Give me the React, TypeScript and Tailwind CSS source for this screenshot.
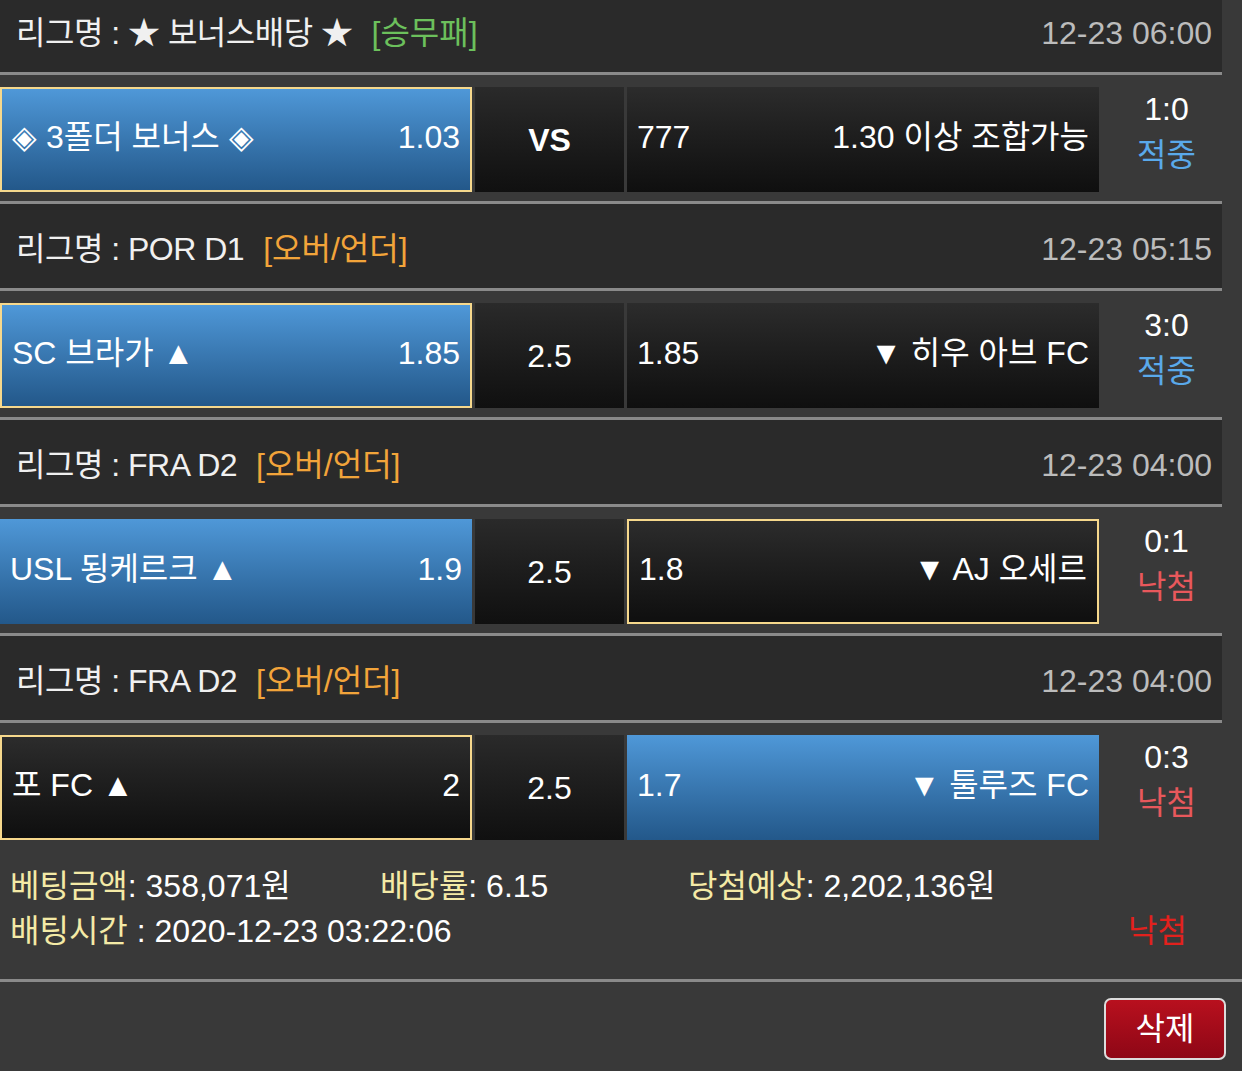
const FONT = { fontFamily: '"Liberation Sans", "Noto Sans CJK KR", sans-serif' };

type Match = {
  league: string;
  type: string;
  typeColor: string;
  time: string;
  home: string;
  homeOdds: string;
  mid: string;
  awayOdds: string;
  away: string;
  pick: "home" | "away";
  win: "home" | "away";
  score: string;
  result: string;
  resultColor: string;
};

const matches: Match[] = [
  {
    league: "★ 보너스배당 ★",
    type: "[승무패]",
    typeColor: "text-[#6cc05c]",
    time: "12-23 06:00",
    home: "◈ 3폴더 보너스 ◈",
    homeOdds: "1.03",
    mid: "VS",
    awayOdds: "777",
    away: "1.30 이상 조합가능",
    pick: "home",
    win: "home",
    score: "1:0",
    result: "적중",
    resultColor: "text-[#5aa9ea]",
  },
  {
    league: "POR D1",
    type: "[오버/언더]",
    typeColor: "text-[#f2a43a]",
    time: "12-23 05:15",
    home: "SC 브라가 ▲",
    homeOdds: "1.85",
    mid: "2.5",
    awayOdds: "1.85",
    away: "▼ 히우 아브 FC",
    pick: "home",
    win: "home",
    score: "3:0",
    result: "적중",
    resultColor: "text-[#5aa9ea]",
  },
  {
    league: "FRA D2",
    type: "[오버/언더]",
    typeColor: "text-[#f2a43a]",
    time: "12-23 04:00",
    home: "USL 됭케르크 ▲",
    homeOdds: "1.9",
    mid: "2.5",
    awayOdds: "1.8",
    away: "▼ AJ 오세르",
    pick: "away",
    win: "home",
    score: "0:1",
    result: "낙첨",
    resultColor: "text-[#e8585c]",
  },
  {
    league: "FRA D2",
    type: "[오버/언더]",
    typeColor: "text-[#f2a43a]",
    time: "12-23 04:00",
    home: "포 FC ▲",
    homeOdds: "2",
    mid: "2.5",
    awayOdds: "1.7",
    away: "▼ 툴루즈 FC",
    pick: "home",
    win: "away",
    score: "0:3",
    result: "낙첨",
    resultColor: "text-[#e8585c]",
  },
];

function OddsCell({
  left,
  right,
  blue,
  picked,
  width,
}: {
  left: string;
  right: string;
  blue: boolean;
  picked: boolean;
  width: string;
}) {
  const bg = blue
    ? "bg-gradient-to-b from-[#4f98d8] to-[#23588a]"
    : "bg-gradient-to-b from-[#2c2c2c] to-[#0f0f0f]";
  const border = picked ? "border-2 border-[#f6d88c]" : "";
  return (
    <div className={`${width} h-full flex items-center justify-between px-[10px] pb-[5px] text-white ${bg} ${border}`}>
      <span className="whitespace-nowrap">{left}</span>
      <span className="whitespace-nowrap">{right}</span>
    </div>
  );
}

function LeagueHeader({ m }: { m: Match }) {
  return (
    <div className="w-[1222px] h-[90px] bg-[#2a2a2a] border-y-[3px] border-[#8a8a8a] flex items-center justify-between pl-[16px] pr-[10px] pt-[6px]">
      <div className="flex items-center text-[#f0f0f0] whitespace-nowrap">
        <span className="tracking-[-0.5px]">리그명 : {m.league}</span>
        <span className={`ml-[19px] ${m.typeColor}`}>{m.type}</span>
      </div>
      <span className="text-[#bcbcbc]">{m.time}</span>
    </div>
  );
}

function MatchRow({ m }: { m: Match }) {
  return (
    <div className="w-[1222px] pt-[12px] pb-[9px] flex">
      <div className="h-[105px] flex gap-[3px]">
        <OddsCell
          left={m.home}
          right={m.homeOdds}
          blue={m.win === "home"}
          picked={m.pick === "home"}
          width="w-[472px]"
        />
        <div
          className={`w-[149px] h-full flex items-center justify-center text-white bg-gradient-to-b from-[#2a2a2a] to-[#101010] ${
            m.mid === "VS" ? "font-bold" : ""
          }`}
        >
          {m.mid}
        </div>
        <OddsCell
          left={m.awayOdds}
          right={m.away}
          blue={m.win === "away"}
          picked={m.pick === "away"}
          width="w-[472px]"
        />
      </div>
      <div className="flex-1 flex flex-col items-center justify-center leading-[46px] -mt-[16px] pl-[12px]">
        <span className="text-white">{m.score}</span>
        <span className={m.resultColor}>{m.result}</span>
      </div>
    </div>
  );
}

export default function App() {
  return (
    <div className="w-[1242px] h-[1071px] overflow-hidden bg-[#393939] text-[32px]" style={FONT}>
      <div className="-mt-[15px]">
        {matches.map((m, i) => (
          <div key={i}>
            <LeagueHeader m={m} />
            <MatchRow m={m} />
          </div>
        ))}

        <div className="h-[130px] pl-[10px] pr-[55px] pt-[14px]">
          <div className="flex h-[45px] items-center whitespace-nowrap">
            <div className="w-[370px]">
              <span className="text-[#f4eaa6]">베팅금액</span>
              <span className="text-white">: 358,071원</span>
            </div>
            <div className="w-[308px]">
              <span className="text-[#f4eaa6]">배당률</span>
              <span className="text-white">: 6.15</span>
            </div>
            <div>
              <span className="text-[#f4eaa6]">당첨예상</span>
              <span className="text-white">: 2,202,136원</span>
            </div>
          </div>
          <div className="flex h-[45px] items-center justify-between whitespace-nowrap">
            <div>
              <span className="text-[#f4eaa6]">배팅시간</span>
              <span className="text-white"> : 2020-12-23 03:22:06</span>
            </div>
            <span className="text-[#e2211d]">낙첨</span>
          </div>
        </div>

        <div className="border-t-[3px] border-[#8a8a8a] flex justify-end pt-[16px] pr-[16px]">
          <button className="w-[122px] h-[62px] rounded-[7px] border-2 border-[#dcdcdc] bg-gradient-to-b from-[#b8101e] to-[#8e0716] text-white text-[32px]">
            삭제
          </button>
        </div>
      </div>
    </div>
  );
}
